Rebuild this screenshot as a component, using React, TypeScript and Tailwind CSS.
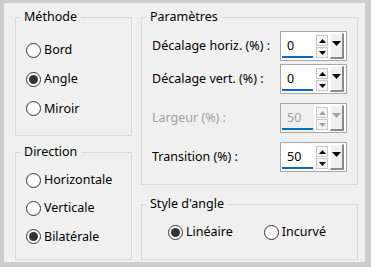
type RadioProps = { label: string; checked?: boolean; className?: string };

function Radio({ label, checked = false, className = "" }: RadioProps) {
  return (
    <div className={`flex items-center gap-[3px] ${className}`}>
      <span className="grid h-[15px] w-[15px] place-items-center rounded-full border border-[#333333] bg-white">
        {checked && <span className="h-[9px] w-[9px] rounded-full bg-[#333333]" />}
      </span>
      <span>{label}</span>
    </div>
  );
}

function Arrow({ up = false, color = "#000000", size = 7 }: { up?: boolean; color?: string; size?: number }) {
  const h = Math.ceil(size / 2);
  return (
    <svg width={size} height={h} viewBox={`0 0 ${size} ${h}`}>
      <polygon points={up ? `0,${h} ${size},${h} ${size / 2},0` : `0,0 ${size},0 ${size / 2},${h}`} fill={color} />
    </svg>
  );
}

function Spin({ value, disabled = false }: { value: string; disabled?: boolean }) {
  const arrow = disabled ? "#a0a0a0" : "#000000";
  return (
    <div className="flex h-[30px] w-[67px] border border-[#a6a6a6] bg-white">
      <div className={`flex w-[33px] flex-col justify-between pt-[6px] pb-[2px] pl-[1px] ${disabled ? "bg-[#f0f0f0] text-[#a0a0a0]" : "text-black"}`}>
        <span className="pl-[5px] leading-[16px]">{value}</span>
        <span className="h-[2px] w-[31px] bg-[#0a6cc0]" />
      </div>
      <div className="ml-[2px] flex flex-col justify-center gap-[1px] pt-[1px]">
        <span className="grid h-[11px] w-[12px] place-items-center border border-[#c8c8c8] bg-[#f4f4f4]">
          <Arrow up color={arrow} size={7} />
        </span>
        <span className="grid h-[11px] w-[12px] place-items-center border border-[#c8c8c8] bg-[#f4f4f4]">
          <Arrow color={arrow} size={7} />
        </span>
      </div>
      <div className="my-[1px] ml-[2px] grid w-[14px] place-items-center border-t border-l border-r-2 border-b-2 border-t-white border-l-white border-r-[#8a8a8a] border-b-[#8a8a8a] bg-[#f0f0f0] pb-[4px]">
        <Arrow color={arrow} size={9} />
      </div>
    </div>
  );
}

function Group({ title, className = "", children }: { title: string; className?: string; children: React.ReactNode }) {
  return (
    <fieldset className={`border border-[#dadada] px-[10px] ${className}`}>
      <legend className="-ml-[6px] px-[4px] leading-[16px] text-black">{title}</legend>
      {children}
    </fieldset>
  );
}

export default function App() {
  return (
    <div className="h-[267px] w-[371px] bg-[#cdcdcd] pt-[3px] pr-[6px] pb-[5px] pl-[4px] font-['Noto_Sans',sans-serif] text-[12.5px] text-black">
      <div className="flex h-full gap-[9px] bg-[#f0f0f0] pt-[6px] pr-[7px] pb-[2px] pl-[11px]">
        <div className="flex w-[117px] flex-col gap-[8px]">
          <Group title="Méthode" className="h-[127px]">
            <div className="flex flex-col gap-[10.5px] pt-[16px]">
              <Radio label="Bord" />
              <Radio label="Angle" checked />
              <Radio label="Miroir" />
            </div>
          </Group>
          <Group title="Direction" className="h-[116px]">
            <div className="flex flex-col gap-[9.5px] pt-[11px]">
              <Radio label="Horizontale" />
              <Radio label="Verticale" />
              <Radio label="Bilatérale" checked />
            </div>
          </Group>
        </div>
        <div className="flex flex-1 flex-col gap-[11px]">
          <Group title="Paramètres" className="h-[176px]">
            <div className="flex flex-col pt-[6px]">
              <div className="flex h-[30px] items-center justify-between">
                <span>Décalage horiz. (%) :</span>
                <Spin value="0" />
              </div>
              <div className="mt-[3px] flex h-[30px] items-center justify-between">
                <span>Décalage vert. (%) :</span>
                <Spin value="0" />
              </div>
              <div className="mt-[9px] flex h-[30px] items-center justify-between">
                <span className="text-[#a0a0a0]">Largeur (%) :</span>
                <Spin value="50" disabled />
              </div>
              <div className="mt-[9px] flex h-[30px] items-center justify-between">
                <span>Transition (%) :</span>
                <Spin value="50" />
              </div>
            </div>
          </Group>
          <Group title="Style d'angle" className="h-[64px]">
            <div className="flex gap-[31px] pt-[11px] pl-[16px]">
              <Radio label="Linéaire" checked />
              <Radio label="Incurvé" />
            </div>
          </Group>
        </div>
      </div>
    </div>
  );
}
